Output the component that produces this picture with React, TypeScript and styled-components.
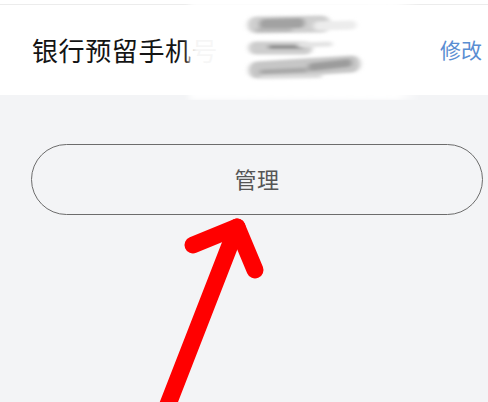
import React from 'react';
import styled, { createGlobalStyle } from 'styled-components';

const GlobalStyle = createGlobalStyle`
  html, body {
    margin: 0;
    padding: 0;
    background: #f3f4f6;
  }
  body {
    font-family: "Noto Sans CJK SC", "Noto Sans", sans-serif;
  }
`;

const Page = styled.div`
  position: relative;
  width: 488px;
  height: 402px;
  overflow: hidden;
  background: #f3f4f6;
`;

const Header = styled.div`
  background: #fff;
  padding-top: 4px;
`;

const Row = styled.div`
  height: 91px;
  box-sizing: border-box;
  border-top: 1px solid #ececec;
  padding: 0 6px 2px 32px;
  display: flex;
  align-items: center;
  justify-content: space-between;
`;

const Label = styled.span`
  font-size: 26px;
  letter-spacing: 0.6px;
  color: #141414;
`;

const EditLink = styled.a`
  font-size: 21px;
  color: #5a8ed2;
  text-decoration: none;
  cursor: pointer;
`;

const Body = styled.div`
  padding: 49px 5px 0 31px;
`;

const ManageButton = styled.button`
  width: 100%;
  height: 71px;
  border: 1.5px solid #6c6c6c;
  border-radius: 36px;
  background: transparent;
  font-family: "Noto Sans CJK SC", "Noto Sans", sans-serif;
  font-size: 22px;
  color: #555;
  letter-spacing: 0.5px;
  padding: 0 0 3px;
  cursor: pointer;
`;

const Overlay = styled.svg`
  position: absolute;
  top: 0;
  left: 0;
  pointer-events: none;
`;

// hand-drawn smear hiding the phone number
const Smudge = () => (
  <Overlay width={488} height={100} viewBox="0 0 488 100">
    <defs>
      <linearGradient id="fade" x1="0" x2="1" y1="0" y2="0">
        <stop offset="0" stopColor="#fff" stopOpacity="0.3" />
        <stop offset="0.03" stopColor="#fff" stopOpacity="0.96" />
        <stop offset="0.9" stopColor="#fff" stopOpacity="1" />
        <stop offset="1" stopColor="#fff" stopOpacity="0" />
      </linearGradient>
      <filter id="blur" x="-20%" y="-60%" width="140%" height="220%">
        <feGaussianBlur stdDeviation="2.6 1.8" />
      </filter>
      <filter id="soft" x="-10%" y="-20%" width="120%" height="140%">
        <feGaussianBlur stdDeviation="2" />
      </filter>
    </defs>
    <rect x={187} y={2} width={232} height={98} fill="url(#fade)" filter="url(#soft)" />
    <g filter="url(#blur)" strokeLinecap="round" fill="none">
      <path d="M256 25 L322 24" stroke="#cfcfcf" strokeWidth={17} />
      <path d="M318 26 L352 25" stroke="#ececec" strokeWidth={9} />
      <path d="M264 24 L300 23" stroke="#a2a2a2" strokeWidth={10} />
      <path d="M258 30 L290 30" stroke="#b8b8b8" strokeWidth={4} />
      <path d="M255 48 L306 48" stroke="#cdcdcd" strokeWidth={13} />
      <path d="M270 47 L302 47" stroke="#8e8e8e" strokeWidth={4} />
      <path d="M300 45 L330 44" stroke="#e4e4e4" strokeWidth={5} />
      <path d="M257 70 L352 64" stroke="#c6c6c6" strokeWidth={17} />
      <path d="M262 72 L305 70" stroke="#a8a8a8" strokeWidth={5} />
      <path d="M312 67 L348 63" stroke="#9c9c9c" strokeWidth={8} />
      <path d="M262 77 L320 76" stroke="#dadada" strokeWidth={4} />
    </g>
  </Overlay>
);

const Arrow = () => (
  <Overlay width={488} height={402} viewBox="0 0 488 402">
    <g
      stroke="#ff0000"
      strokeWidth={17}
      strokeLinecap="round"
      strokeLinejoin="round"
      fill="none"
    >
      <path d="M237 227 L158 430" />
      <path d="M193 245 L237 227 L255 270" />
    </g>
  </Overlay>
);

export default function App() {
  return (
    <Page>
      <GlobalStyle />
      <Header>
        <Row>
          <Label>银行预留手机号</Label>
          <EditLink>修改</EditLink>
        </Row>
      </Header>
      <Body>
        <ManageButton>管理</ManageButton>
      </Body>
      <Smudge />
      <Arrow />
    </Page>
  );
}
